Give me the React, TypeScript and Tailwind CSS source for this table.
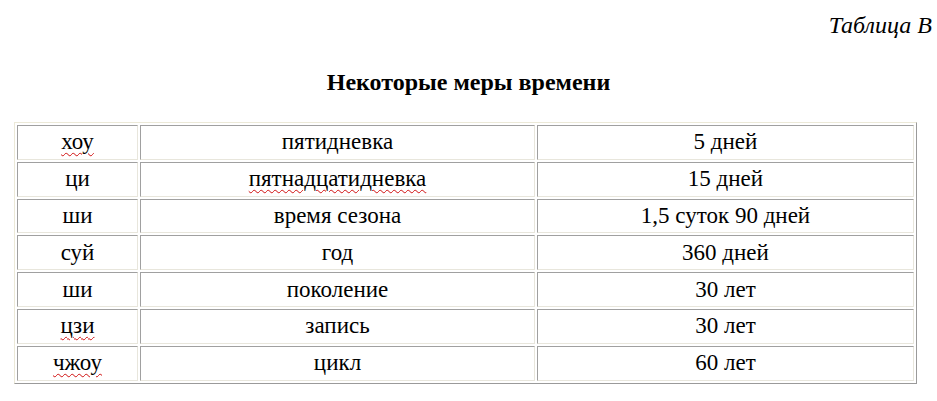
import React from 'react'

const rows = [
  { a: 'хоу', b: 'пятидневка', c: '5 дней', wavyA: true, wavyB: false },
  { a: 'ци', b: 'пятнадцатидневка', c: '15 дней', wavyA: false, wavyB: true },
  { a: 'ши', b: 'время сезона', c: '1,5 суток 90 дней', wavyA: false, wavyB: false },
  { a: 'суй', b: 'год', c: '360 дней', wavyA: false, wavyB: false },
  { a: 'ши', b: 'поколение', c: '30 лет', wavyA: false, wavyB: false },
  { a: 'цзи', b: 'запись', c: '30 лет', wavyA: true, wavyB: false },
  { a: 'чжоу', b: 'цикл', c: '60 лет', wavyA: true, wavyB: false },
]

const cell =
  'h-[34.8px] p-0 text-center align-middle border border-t-[#a0a0a0] border-l-[#a0a0a0] border-r-[#e8e6dc] border-b-[#e8e6dc]'

const wavy = 'underline decoration-wavy decoration-[#d01010] decoration-1 underline-offset-[3px]'

const App = () => {
  return (
    <div className="w-[937px] h-[401px] bg-white text-black font-['Liberation_Serif',serif] overflow-hidden">
      <div className="flex justify-end pr-[5px] pt-[11px] text-[24px] italic leading-[28px]">
        Таблица В
      </div>
      <div className="mt-[29px] text-center text-[24px] font-bold leading-[28px]">
        Некоторые меры времени
      </div>
      <div className="pl-[14px] pt-[26px]">
        <table className="w-[903px] border-separate border-spacing-[2px] border border-t-[#ece9d8] border-l-[#ece9d8] border-r-[#9a9a9a] border-b-[#9a9a9a] text-[23px] leading-[26px]">
          <tbody>
            {rows.map((r, i) => (
              <tr key={i}>
                <td className={cell + ' w-[121px]'}>
                  <span className={r.wavyA ? wavy : ''}>{r.a}</span>
                </td>
                <td className={cell + ' w-[395px]'}>
                  <span className={r.wavyB ? wavy : ''}>{r.b}</span>
                </td>
                <td className={cell}>{r.c}</td>
              </tr>
            ))}
          </tbody>
        </table>
      </div>
    </div>
  )
}

export default App
